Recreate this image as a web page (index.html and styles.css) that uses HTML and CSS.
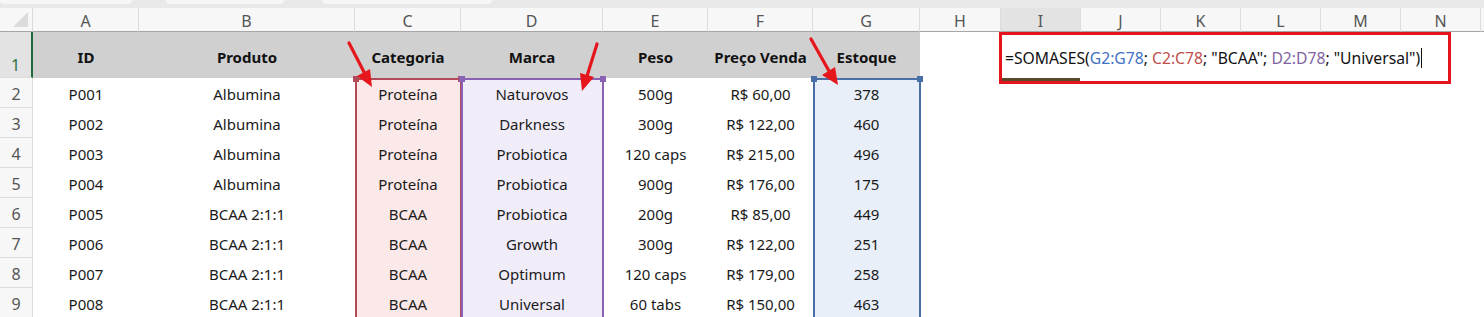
FILE: index.html
```html
<!DOCTYPE html>
<html lang="pt">
<head>
<meta charset="utf-8">
<link rel="stylesheet" href="styles.css">
</head>
<body>
<div class="page">
  <div class="topbar">
    <span class="tb tb1"></span><span class="tb tb2"></span><span class="tb tb3"></span>
  </div>
  <div class="sheet">
    <div class="corner"><span class="tri"></span></div>
    <div class="ch">A</div><div class="ch">B</div><div class="ch">C</div><div class="ch">D</div><div class="ch">E</div><div class="ch">F</div><div class="ch">G</div><div class="ch">H</div><div class="ch ch-sel">I</div><div class="ch">J</div><div class="ch">K</div><div class="ch">L</div><div class="ch">M</div><div class="ch">N</div><div class="ch ch-end"></div>

    <div class="rh rh-sel">1</div>
    <div class="hd">ID</div><div class="hd">Produto</div><div class="hd">Categoria</div><div class="hd">Marca</div><div class="hd">Peso</div><div class="hd">Preço Venda</div><div class="hd">Estoque</div>
    <div class="c"></div><div class="c"></div><div class="c"></div><div class="c"></div><div class="c"></div><div class="c"></div><div class="c"></div><div class="c"></div>

    <div class="rh">2</div>
    <div class="c">P001</div><div class="c">Albumina</div><div class="c rc">Proteína</div><div class="c pc">Naturovos</div><div class="c">500g</div><div class="c">R$ 60,00</div><div class="c bc">378</div>
    <div class="c"></div><div class="c"></div><div class="c"></div><div class="c"></div><div class="c"></div><div class="c"></div><div class="c"></div><div class="c"></div>

    <div class="rh">3</div>
    <div class="c">P002</div><div class="c">Albumina</div><div class="c rc">Proteína</div><div class="c pc">Darkness</div><div class="c">300g</div><div class="c">R$ 122,00</div><div class="c bc">460</div>
    <div class="c"></div><div class="c"></div><div class="c"></div><div class="c"></div><div class="c"></div><div class="c"></div><div class="c"></div><div class="c"></div>

    <div class="rh">4</div>
    <div class="c">P003</div><div class="c">Albumina</div><div class="c rc">Proteína</div><div class="c pc">Probiotica</div><div class="c">120 caps</div><div class="c">R$ 215,00</div><div class="c bc">496</div>
    <div class="c"></div><div class="c"></div><div class="c"></div><div class="c"></div><div class="c"></div><div class="c"></div><div class="c"></div><div class="c"></div>

    <div class="rh">5</div>
    <div class="c">P004</div><div class="c">Albumina</div><div class="c rc">Proteína</div><div class="c pc">Probiotica</div><div class="c">900g</div><div class="c">R$ 176,00</div><div class="c bc">175</div>
    <div class="c"></div><div class="c"></div><div class="c"></div><div class="c"></div><div class="c"></div><div class="c"></div><div class="c"></div><div class="c"></div>

    <div class="rh">6</div>
    <div class="c">P005</div><div class="c">BCAA 2:1:1</div><div class="c rc">BCAA</div><div class="c pc">Probiotica</div><div class="c">200g</div><div class="c">R$ 85,00</div><div class="c bc">449</div>
    <div class="c"></div><div class="c"></div><div class="c"></div><div class="c"></div><div class="c"></div><div class="c"></div><div class="c"></div><div class="c"></div>

    <div class="rh">7</div>
    <div class="c">P006</div><div class="c">BCAA 2:1:1</div><div class="c rc">BCAA</div><div class="c pc">Growth</div><div class="c">300g</div><div class="c">R$ 122,00</div><div class="c bc">251</div>
    <div class="c"></div><div class="c"></div><div class="c"></div><div class="c"></div><div class="c"></div><div class="c"></div><div class="c"></div><div class="c"></div>

    <div class="rh">8</div>
    <div class="c">P007</div><div class="c">BCAA 2:1:1</div><div class="c rc">BCAA</div><div class="c pc">Optimum</div><div class="c">120 caps</div><div class="c">R$ 179,00</div><div class="c bc">258</div>
    <div class="c"></div><div class="c"></div><div class="c"></div><div class="c"></div><div class="c"></div><div class="c"></div><div class="c"></div><div class="c"></div>

    <div class="rh">9</div>
    <div class="c">P008</div><div class="c">BCAA 2:1:1</div><div class="c rc">BCAA</div><div class="c pc">Universal</div><div class="c">60 tabs</div><div class="c">R$ 150,00</div><div class="c bc">463</div>
    <div class="c"></div><div class="c"></div><div class="c"></div><div class="c"></div><div class="c"></div><div class="c"></div><div class="c"></div><div class="c"></div>

    <div class="range range-c"><i class="h tl"></i><i class="h tr"></i></div>
    <div class="range range-d"><i class="h tl"></i><i class="h tr"></i></div>
    <div class="range range-g"><i class="h tl"></i><i class="h tr"></i></div>

    <div class="editor">
      <span class="ftext">=SOMASES(<span class="fb">G2:G78</span>; <span class="fr">C2:C78</span>; "BCAA"; <span class="fp">D2:D78</span>; "Universal")</span><span class="caret"></span>
    </div>
    <div class="active-line"></div>

    <svg class="arrows" width="1484" height="317" viewBox="0 0 1484 317">
      <g stroke="#e5161c" stroke-width="3.2" stroke-linecap="round" fill="none">
        <line x1="349" y1="43" x2="364" y2="72"/>
        <line x1="597" y1="44" x2="587" y2="76"/>
        <line x1="811" y1="39" x2="829" y2="71"/>
      </g>
      <g fill="#e5161c">
        <polygon points="372,87 357,76 370,69"/>
        <polygon points="582,91 580,73 594,77"/>
        <polygon points="838,85 822,75 835,67"/>
      </g>
    </svg>
  </div>
</div>
</body>
</html>
```

FILE: styles.css
```css
* { box-sizing: border-box; }
html, body { margin: 0; padding: 0; background: #ffffff; }
body { font-family: "Noto Sans", "Liberation Sans", sans-serif; color: #111; }

.page { width: 1484px; height: 317px; overflow: hidden; }

.topbar {
  height: 8px;
  background: #e9e9e9;
  display: flex;
  gap: 14px;
  padding: 0 0 2px 0;
}
.tb { display: block; height: 4px; background: #f6f6f6; border-radius: 0 0 4px 4px; }
.tb1 { width: 132px; }
.tb2 { width: 118px; margin-left: 20px; }
.tb3 { width: 170px; margin-left: 24px; }

.sheet {
  position: relative;
  display: grid;
  grid-template-columns: 33px 106px 216px 106px 142px 105px 105px 107px 81px 80px 80px 80px 80px 80px 80px 3px;
  grid-template-rows: 24px 46px repeat(8, 30px);
  font-size: 15px;
}

.corner {
  position: relative;
  background: #f7f7f7;
  border-right: 1px solid #dadada;
  border-bottom: 1px solid #a6a6a6;
}
.tri {
  position: absolute; right: 4px; bottom: 4px;
  width: 0; height: 0;
  border-left: 15px solid transparent;
  border-bottom: 15px solid #dcdcdc;
}

.ch {
  background: #f7f7f7;
  border-right: 1px solid #dcdcdc;
  border-bottom: 1px solid #a6a6a6;
  color: #555;
  font-family: "Noto Sans", sans-serif;
  font-size: 16px;
  display: flex; align-items: center; justify-content: center;
  line-height: 1;
  padding-top: 2px;
}
.ch-sel { background: #e3e3e3; }
.ch-end { border-right: none; }

.rh {
  background: #f7f7f7;
  border-right: 1px solid #dcdcdc;
  border-bottom: 1px solid #dcdcdc;
  color: #555;
  font-size: 16px;
  display: flex; align-items: flex-end; justify-content: center;
  padding-bottom: 5px;
  line-height: 1;
}
.rh-sel {
  background: #e3e3e3;
  color: #2f6f46;
  border-right: 2px solid #1e6b3a;
  padding-bottom: 4px;
}

.hd {
  background: #d0d0d0;
  font-weight: 700;
  display: flex; align-items: center; justify-content: center;
  padding-top: 3px;
  color: #111;
  white-space: nowrap;
}

.c {
  display: flex; align-items: center; justify-content: center;
  white-space: nowrap;
  color: #1a1a1a;
  padding-top: 1px;
}
.rc { background: #fbe8e8; }
.pc { background: #f1edf8; }
.bc { background: #e8eff9; }

.range {
  position: absolute;
  top: 70px;
  height: 252px;
  border: 2px solid;
  pointer-events: none;
}
.range-c { left: 355px; width: 107px; border-color: #b24b57; }
.range-d { left: 461px; width: 143px; border-color: #8a62b4; }
.range-g { left: 813px; width: 108px; border-color: #4a6fa7; }
.h {
  position: absolute; top: -4px;
  width: 6px; height: 6px;
}
.range-c .h { background: #b24b57; }
.range-d .h { background: #8a62b4; }
.range-g .h { background: #4a6fa7; }
.h.tl { left: -4px; }
.h.tr { right: -4px; }

.active-line {
  position: absolute;
  left: 1002px; top: 70px;
  width: 78px; height: 3px;
  background: #5a4a2a;
}

.editor {
  position: absolute;
  left: 999px; top: 24px;
  width: 452px; height: 52px;
  border: 3px solid #e3141b;
  background: #fff;
  display: flex; align-items: center;
  padding-left: 3px;
  font-size: 15.7px;
  color: #111;
}
.ftext { white-space: nowrap; }
.fb { color: #4472c4; }
.fr { color: #c0504d; }
.fp { color: #8064a2; }
.caret {
  display: inline-block;
  width: 1px; height: 20px;
  background: #111;
  margin-left: 1px;
}

.arrows {
  position: absolute;
  left: 0; top: -8px;
  pointer-events: none;
}
```
